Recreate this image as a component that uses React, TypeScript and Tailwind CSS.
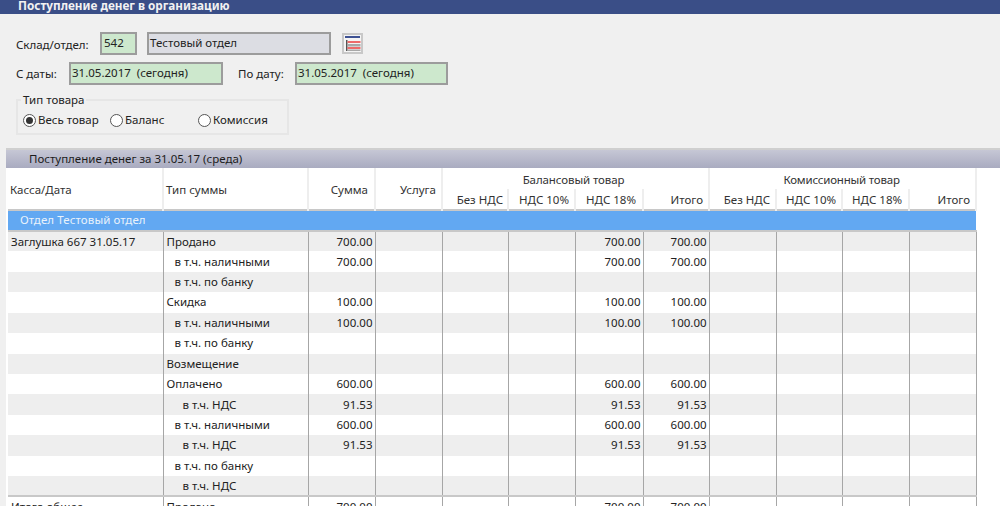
import React from 'react';

const FONT = "font-['Noto_Sans',sans-serif]";

type Row = {
  kassa?: string;
  type: string;
  indent?: number;
  sum?: string;
  b18?: string;
  bTotal?: string;
};

const rows: Row[] = [
  { kassa: 'Заглушка 667 31.05.17', type: 'Продано', sum: '700.00', b18: '700.00', bTotal: '700.00' },
  { type: 'в т.ч. наличными', indent: 1, sum: '700.00', b18: '700.00', bTotal: '700.00' },
  { type: 'в т.ч. по банку', indent: 1 },
  { type: 'Скидка', sum: '100.00', b18: '100.00', bTotal: '100.00' },
  { type: 'в т.ч. наличными', indent: 1, sum: '100.00', b18: '100.00', bTotal: '100.00' },
  { type: 'в т.ч. по банку', indent: 1 },
  { type: 'Возмещение' },
  { type: 'Оплачено', sum: '600.00', b18: '600.00', bTotal: '600.00' },
  { type: 'в т.ч. НДС', indent: 2, sum: '91.53', b18: '91.53', bTotal: '91.53' },
  { type: 'в т.ч. наличными', indent: 1, sum: '600.00', b18: '600.00', bTotal: '600.00' },
  { type: 'в т.ч. НДС', indent: 2, sum: '91.53', b18: '91.53', bTotal: '91.53' },
  { type: 'в т.ч. по банку', indent: 1 },
  { type: 'в т.ч. НДС', indent: 2 },
];

const colWidths = [155, 145, 67, 67, 66, 67, 68, 66, 67, 66, 67, 67];

const subHeads = [
  { t: 'Без НДС', c: 'pr-[4px]' },
  { t: 'НДС 10%', c: 'pr-[5px]' },
  { t: 'НДС 18%', c: 'pr-[6px]' },
  { t: 'Итого', c: 'pr-[5px]' },
  { t: 'Без НДС', c: 'pr-[5px]' },
  { t: 'НДС 10%', c: 'pr-[5px]' },
  { t: 'НДС 18%', c: 'pr-[6px]' },
  { t: 'Итого', c: 'pr-[5px]' },
];

function Radio({ label, checked, className }: { label: string; checked?: boolean; className: string }) {
  return (
    <div className={`flex items-center ${className}`}>
      <span className="w-[13px] h-[13px] rounded-full border border-[#555] bg-white flex items-center justify-center shrink-0">
        {checked && <span className="w-[7px] h-[7px] rounded-full bg-[#333]" />}
      </span>
      <span className="ml-[2px]">{label}</span>
    </div>
  );
}

function Field({ value, className }: { value: string; className: string }) {
  return (
    <div className={`h-[23px] border-2 border-[#9c9c9c] flex items-center pl-[1px] pb-[1px] text-[#222] ${className}`}>
      {value}
    </div>
  );
}

function ListIcon() {
  return (
    <div className="w-[21px] h-[21px] ml-[11px] bg-[#c8c8c8] flex items-center justify-center">
      <svg width="17" height="17" viewBox="0 0 17 17">
        <rect width="17" height="17" fill="#f4f4f4" />
        <rect x="1" y="1" width="15" height="2" fill="#3e5293" />
        <rect x="2" y="5" width="1.5" height="11" fill="#555" />
        <rect x="3.5" y="6" width="13" height="2" fill="#ee6a6a" />
        <rect x="3.5" y="9" width="13" height="2.5" fill="#a8a8a8" />
        <rect x="3.5" y="12" width="13" height="2" fill="#ee6a6a" />
        <rect x="3.5" y="14.5" width="13" height="1.5" fill="#a8a8a8" />
      </svg>
    </div>
  );
}

function HeadCell({ children, className = '', ...rest }: React.ThHTMLAttributes<HTMLTableCellElement>) {
  return (
    <th {...rest} className={`font-normal border-r-2 border-[#eeeeee] p-0 ${className}`}>
      {children}
    </th>
  );
}

export default function App() {
  return (
    <div className={`w-[1000px] h-[506px] overflow-hidden bg-[#f0f0f0] text-[11.5px] leading-[14px] text-[#222] flex flex-col ${FONT}`}>
      <div className="h-[14px] shrink-0 bg-[#3a4e87] pl-[18px] font-bold text-[11.75px] text-[#f2f2f2] leading-[10px]">
        Поступление денег в организацию
      </div>

      <div className="h-[134px] shrink-0 pt-[18px] pl-[16px]">
        <div className="flex items-center">
          <span className="w-[84px] pt-[2px]">Склад/отдел:</span>
          <Field value="542" className="w-[37px] bg-[#cde8cd] pl-[2px]" />
          <Field value="Тестовый отдел" className="w-[184px] ml-[10px] bg-[#dcdde3] pl-[1px]" />
          <ListIcon />
        </div>
        <div className="flex items-center mt-[7px]">
          <span className="w-[53px]">С даты:</span>
          <Field value="31.05.2017  (сегодня)" className="w-[154px] bg-[#cde8cd] whitespace-pre" />
          <span className="w-[57px] ml-[15px]">По дату:</span>
          <Field value="31.05.2017  (сегодня)" className="w-[153px] bg-[#cde8cd] whitespace-pre" />
        </div>
        <fieldset className="w-[273px] h-[42px] mt-[8px] border-2 border-[#e6e6e6]">
          <legend className="ml-[3px] px-[2px] leading-[14px]">Тип товара</legend>
          <div className="flex items-center mt-[6px] pl-[5px]">
            <Radio label="Весь товар" checked className="w-[87px]" />
            <Radio label="Баланс" className="w-[88px]" />
            <Radio label="Комиссия" className="" />
          </div>
        </fieldset>
      </div>

      <div className="ml-[6px] flex-1 min-h-0 bg-white border-t-2 border-[#cfcfcf] overflow-hidden">
        <div className="h-[18px] bg-gradient-to-b from-[#c6c7d5] to-[#a9abc0] pl-[23px] leading-[17px] text-[#1c1c1c]">
          Поступление денег за 31.05.17 (среда)
        </div>
        <table className="ml-[2px] table-fixed border-collapse w-[968px]">
          <colgroup>
            {colWidths.map((w, i) => (
              <col key={i} span={1} width={w} />
            ))}
          </colgroup>
          <thead className="text-[#333]">
            <tr className="h-[21px]">
              <HeadCell rowSpan={2} className="text-left pl-[2px] pt-[2px]">Касса/Дата</HeadCell>
              <HeadCell rowSpan={2} className="text-left pl-[2px] pt-[2px]">Тип суммы</HeadCell>
              <HeadCell rowSpan={2} className="text-right pr-[6px] pt-[2px]">Сумма</HeadCell>
              <HeadCell rowSpan={2} className="text-right pr-[5px] pt-[2px]">Услуга</HeadCell>
              <HeadCell colSpan={4} className="text-center pt-[2px] pr-[4px] tracking-[-0.1px]">Балансовый товар</HeadCell>
              <HeadCell colSpan={4} className="text-center pt-[2px] pr-[2px] tracking-[-0.2px]">Комиссионный товар</HeadCell>
            </tr>
            <tr className="h-[21px] border-b-2 border-[#c8c8c8]">
              {subHeads.map((h, i) => (
                <HeadCell key={i} className={`text-right pt-[2px] ${h.c}`}>{h.t}</HeadCell>
              ))}
            </tr>
          </thead>
          <tbody>
            <tr className="h-[21px] bg-[#62a8f2] border-b-2 border-[#c8c8c8]">
              <td colSpan={12} className="p-0 pl-[12px] pb-[1px] text-[#e9f2fb] tracking-[0.1px]">Отдел Тестовый отдел</td>
            </tr>
            {rows.map((r, i) => {
              const cells: (string | undefined)[] = [r.sum, undefined, undefined, undefined, r.b18, r.bTotal, undefined, undefined, undefined, undefined];
              return (
                <tr key={i} className={`h-[20.43px] ${i % 2 === 0 ? 'bg-[#eeeeee]' : 'bg-white'}`}>
                  <td className="p-0 pl-[3px] border-r border-[#a6a6a6] whitespace-nowrap">{r.kassa}</td>
                  <td className={`p-0 border-r border-[#a6a6a6] whitespace-nowrap ${r.indent === 2 ? 'pl-[19px]' : r.indent === 1 ? 'pl-[11px]' : 'pl-[3px]'}`}>
                    {r.type}
                  </td>
                  {cells.map((c, j) => (
                    <td key={j} className="p-0 pr-[2px] text-right border-r border-[#a6a6a6]">{c}</td>
                  ))}
                </tr>
              );
            })}
            <tr className="h-[20px] border-t-2 border-[#c8c8c8]">
              <td className="p-0 pl-[3px] border-r border-[#a6a6a6] whitespace-nowrap">Итого общее</td>
              <td className="p-0 pl-[3px] border-r border-[#a6a6a6]">Продано</td>
              <td className="p-0 pr-[2px] text-right border-r border-[#a6a6a6]">700.00</td>
              <td className="p-0 border-r border-[#a6a6a6]" />
              <td className="p-0 border-r border-[#a6a6a6]" />
              <td className="p-0 border-r border-[#a6a6a6]" />
              <td className="p-0 pr-[2px] text-right border-r border-[#a6a6a6]">700.00</td>
              <td className="p-0 pr-[2px] text-right border-r border-[#a6a6a6]">700.00</td>
              <td className="p-0 border-r border-[#a6a6a6]" />
              <td className="p-0 border-r border-[#a6a6a6]" />
              <td className="p-0 border-r border-[#a6a6a6]" />
              <td className="p-0 border-r border-[#a6a6a6]" />
            </tr>
          </tbody>
        </table>
      </div>
    </div>
  );
}
